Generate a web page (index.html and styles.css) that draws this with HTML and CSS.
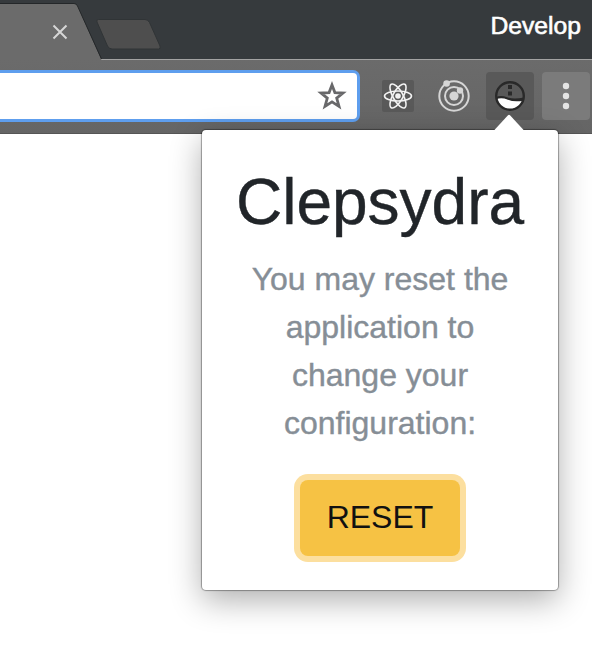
FILE: index.html
```html
<!DOCTYPE html>
<html lang="en">
<head>
<meta charset="utf-8">
<title>Clepsydra</title>
<link rel="stylesheet" href="styles.css">
</head>
<body>
<header class="browser">
  <div class="tabstrip">
    <svg class="tabs" width="170" height="60" viewBox="0 0 170 60">
      <path d="M0 3.5H74Q76.500 3.500 77.500 6L101.500 60H0Z" fill="#6b6b6b"/>
      <path d="M0 3.500H74Q76.500 3.500 77.500 6L101.500 59" fill="none" stroke="#242729"/>
      <path d="M53.500 25.500L66.500 38.500M66.500 25.500L53.500 38.500" stroke="#d6d6d6" stroke-width="2"/>
      <path d="M98.500 19.500H145Q148 19.500 149.500 22.500L160 46Q161 49 158.500 49H112Q109 49 107.500 46L97 22Q96 19.500 98.500 19.500Z" fill="#4e4e4e" stroke="#303436"/>
    </svg>
    <span class="profile">Develop</span>
  </div>
  <div class="toolbar">
    <div class="address">
      <svg width="30" height="30" viewBox="0 0 30 30"><path d="M15 4L17.900 11.600L26 12L19.700 17.100L22 25.400L15 20.900L8 25.400L10.300 17.100L4 12L12.100 11.600Z" fill="none" stroke="#68686a" stroke-width="2.800"/></svg>
    </div>
    <div class="extension react">
      <svg width="32" height="32" viewBox="0 0 32 32" fill="none" stroke="#f2f2f2" stroke-width="1.600"><ellipse cx="16" cy="16" rx="13.500" ry="5"/><ellipse cx="16" cy="16" rx="13.500" ry="5" transform="rotate(60 16 16)"/><ellipse cx="16" cy="16" rx="13.500" ry="5" transform="rotate(120 16 16)"/><circle cx="16" cy="16" r="2.800" fill="#f2f2f2" stroke="none"/></svg>
    </div>
    <div class="extension orbit">
      <svg width="32" height="32" viewBox="0 0 32 32" fill="none" stroke="#d6d6d6" stroke-width="2"><circle cx="16" cy="16" r="14.700"/><circle cx="16" cy="16" r="9"/><circle cx="16" cy="16" r="4.600" fill="#d6d6d6" stroke="none"/><circle cx="8.600" cy="3.500" r="3.300" fill="#d6d6d6" stroke="none"/><circle cx="22" cy="10.500" r="3.200" fill="#d6d6d6" stroke="none"/></svg>
    </div>
    <div class="extension active">
      <svg width="32" height="32" viewBox="0 0 32 32"><path d="M3 18.500Q8 16.500 13 19T29 20.500C27 26.500 22 29 16 29S5 26 3 18.500Z" fill="#fff"/><path d="M2 17Q7 15 13 17.200T30 17.500V20.500Q21 22.500 14 19.800T2 19.500Z" fill="#292929"/><circle cx="16" cy="16" r="13.800" fill="none" stroke="#292929" stroke-width="2.400"/><path d="M14 5h4v4h-4zM14 11.500h4v4h-4z" fill="#292929"/></svg>
    </div>
    <div class="extension menu">
      <svg width="8" height="28" viewBox="0 0 8 28" fill="#e4e4e4"><circle cx="4" cy="4" r="3.200"/><circle cx="4" cy="14" r="3.200"/><circle cx="4" cy="24" r="3.200"/></svg>
    </div>
  </div>
</header>
<main class="popup">
  <svg class="arrow" width="32" height="17" viewBox="0 0 32 17"><path d="M.5 17L15 1.300Q16 .3 17 1.300L31.500 17Z" fill="#fff"/></svg>
  <h1>Clepsydra</h1>
  <p>You may reset the application to change your configuration:</p>
  <button type="button">RESET</button>
</main>
</body>
</html>
```

FILE: styles.css
```css
* { box-sizing: border-box; }

body {
  margin: 0;
  height: 646px;
  overflow: hidden;
  background: #fff;
  font-family: "Liberation Sans", Arial, sans-serif;
}

.tabstrip {
  display: flex;
  justify-content: space-between;
  height: 60px;
  background: linear-gradient(#363a3d 59px, #a3a3a3 59px);
}

.tabs { display: block; }

.profile {
  padding: 12px 11px 0 0;
  color: #fff;
  font-size: 24.700px;
  line-height: 28px;
  -webkit-text-stroke: .6px #fff;
}

.toolbar {
  display: flex;
  align-items: center;
  gap: 8px;
  height: 74px;
  padding: 0 2px 2px 0;
  background: linear-gradient(#6b6b6b, #656565 73px, #555 73px);
}

.address {
  display: flex;
  flex: 1;
  align-items: center;
  justify-content: flex-end;
  height: 52px;
  margin-right: 6px;
  padding-right: 10px;
  background: #fff;
  border: solid #5e9eee;
  border-width: 3px 3px 3px 0;
  border-radius: 0 7px 7px 0;
}

.extension {
  display: flex;
  flex: none;
  align-items: center;
  justify-content: center;
  width: 48px;
  height: 48px;
  border-radius: 4px;
}

.react svg { background: #595959; border-radius: 2px; }
.active { background: #595959; }
.menu { background: #7b7b7b; }

.popup {
  position: absolute;
  top: 130px;
  left: 202px;
  width: 356px;
  height: 460px;
  padding-top: 34px;
  background: #fff;
  border-radius: 4px;
  box-shadow: 0 0 1px 1px rgba(0, 0, 0, .34), 0 10px 32px rgba(0, 0, 0, .32);
  text-align: center;
}

.arrow {
  position: absolute;
  top: -16px;
  left: 291px;
}

h1 {
  margin: 0 0 14px;
  color: #212529;
  font-size: 64px;
  font-weight: 400;
  line-height: 77px;
  -webkit-text-stroke: .4px #212529;
}

p {
  margin: 0 40px 33px;
  color: #868e96;
  font-size: 32px;
  line-height: 48px;
  -webkit-text-stroke: .4px #868e96;
}

button {
  width: 160px;
  height: 76px;
  padding: 0 0 2px;
  background: #f6c244;
  border: 0;
  border-radius: 8px;
  box-shadow: 0 0 0 6px #fcdf9f;
  color: #111;
  font: 32px/48px "Liberation Sans", Arial, sans-serif;
}
```
